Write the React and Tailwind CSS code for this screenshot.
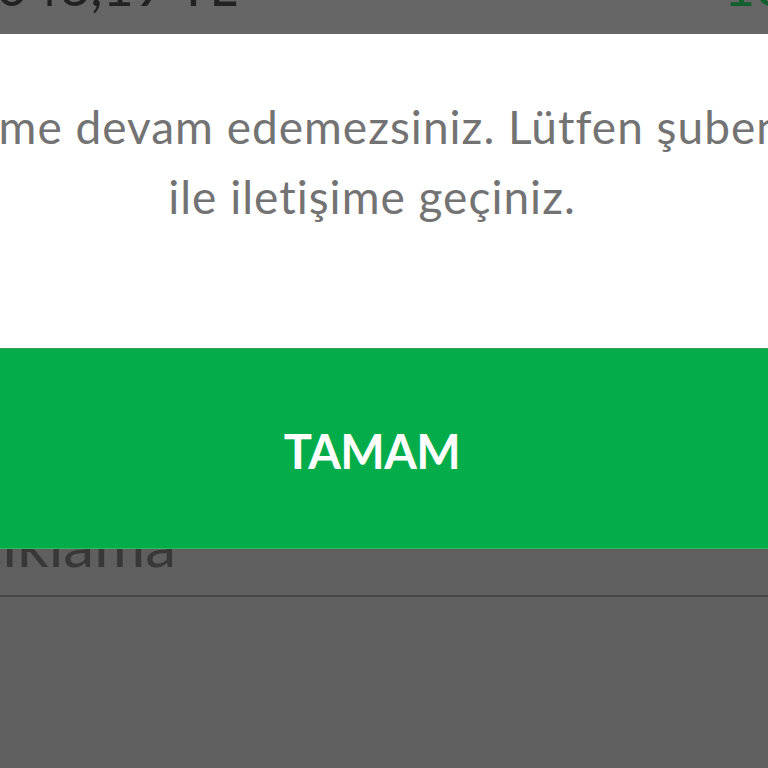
export default function App() {
  const font = { fontFamily: 'Lato, "Noto Sans", sans-serif' };
  return (
    <div className="relative h-[768px] w-[768px] overflow-hidden bg-[#5f5f5f]" style={font}>
      {/* page behind the dim overlay */}
      <div className="relative h-[34px] bg-[#666666]">
        <div className="absolute bottom-[21px] right-[531px] whitespace-nowrap text-[54px] leading-none text-[#222222]">1.046,19 TL</div>
        <div className="absolute bottom-[21px] left-[724px] whitespace-nowrap text-[54px] leading-none text-[#11602d]">10</div>
      </div>
      <div className="mt-[478px] flex w-[176px] justify-end">
        <div className="whitespace-nowrap text-[62px] leading-none text-[#383838]">Açıklama</div>
      </div>
      <div className="mt-[21px] h-[2px] bg-[#474747]" />

      {/* dialog */}
      <div className="absolute left-[372px] top-[34px] w-[1000px] -translate-x-1/2">
        <div className="flex h-[314px] flex-col items-center bg-white pt-[58px] text-[46px] leading-[70px] tracking-[1px] text-[#737373]">
          <div className="whitespace-nowrap">İşleme devam edemezsiniz. Lütfen şubeniz</div>
          <div className="whitespace-nowrap">ile iletişime geçiniz.</div>
        </div>
        <div className="h-px bg-[#3f9d5c]" />
        <div className="flex h-[200px] items-center justify-center border-b border-[#2fb862] bg-[#05ad4a] pt-[6px]">
          <span className="text-[47px] font-bold tracking-[-0.5px] text-white">TAMAM</span>
        </div>
      </div>
    </div>
  );
}
